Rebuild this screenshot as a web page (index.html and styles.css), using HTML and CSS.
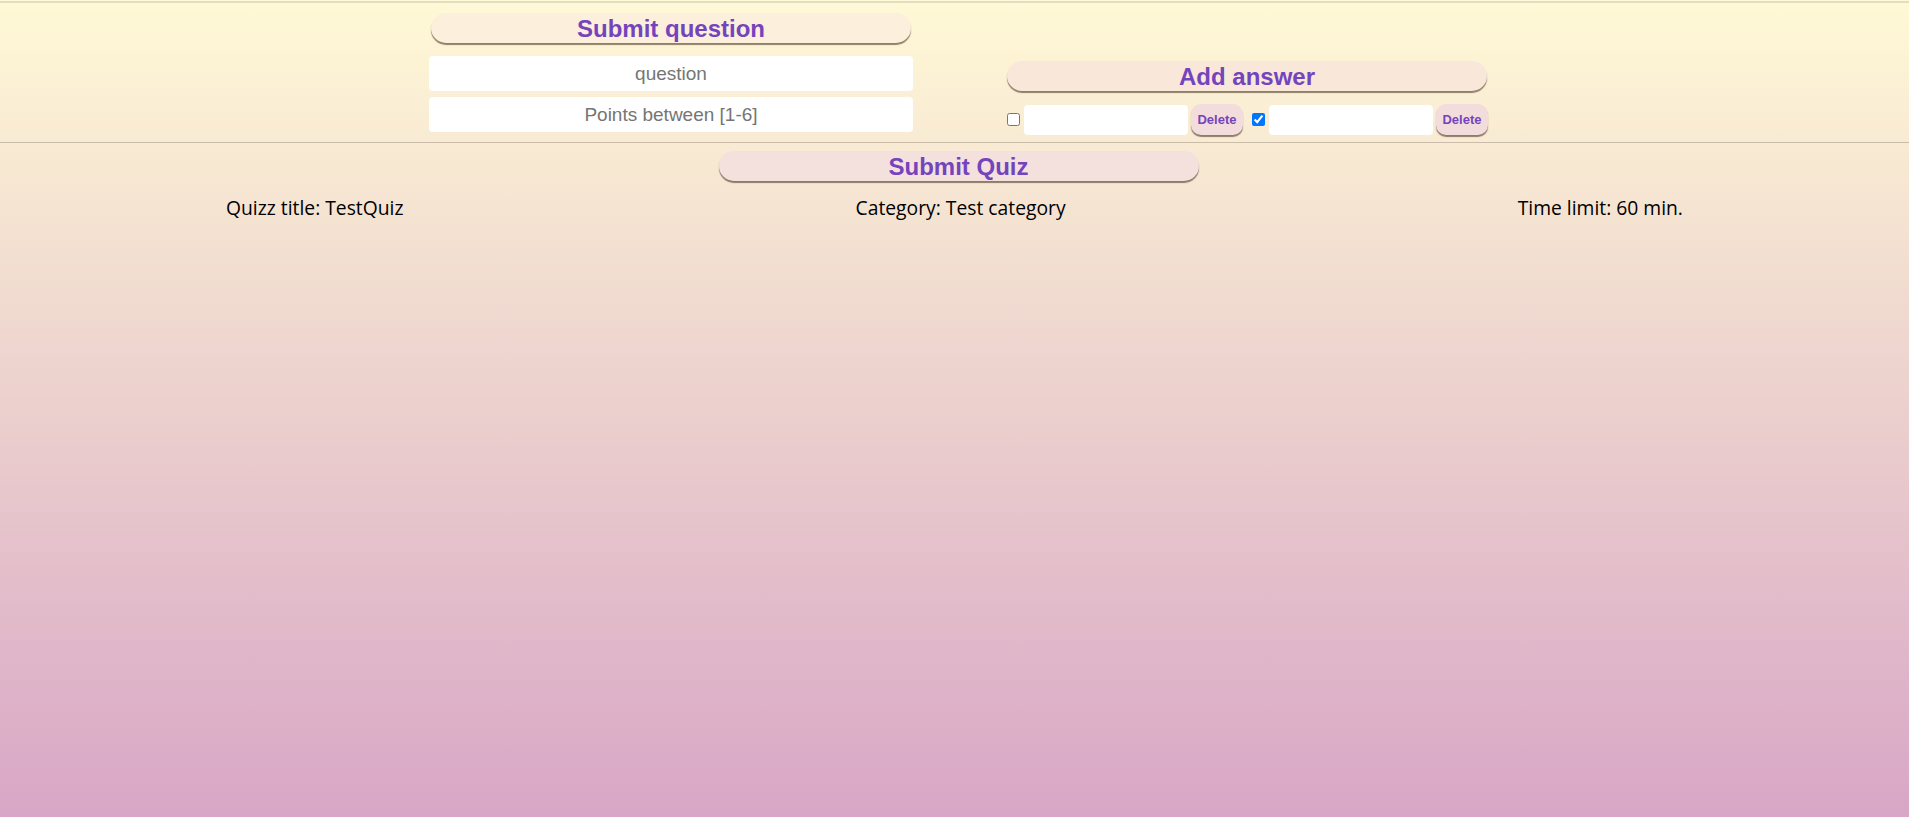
FILE: index.html
```html
<!DOCTYPE html>
<html lang="en">
<head>
<meta charset="utf-8">
<title>Quiz editor</title>
<link rel="stylesheet" href="styles.css">
</head>
<body>
<div class="page">
  <header class="editor">
    <form class="question-form">
      <button type="button" class="pill-btn pill-btn--question">Submit question</button>
      <input class="field" type="text" placeholder="question">
      <input class="field field--last" type="text" placeholder="Points between [1-6]">
    </form>
    <div class="answers">
      <button type="button" class="pill-btn pill-btn--answer">Add answer</button>
      <div class="answer-list">
        <div class="answer">
          <input class="answer-check" type="checkbox">
          <input class="answer-field" type="text">
          <button type="button" class="delete-btn">Delete</button>
        </div>
        <div class="answer">
          <input class="answer-check" type="checkbox" checked>
          <input class="answer-field" type="text">
          <button type="button" class="delete-btn">Delete</button>
        </div>
      </div>
    </div>
  </header>
  <div class="submit-row">
    <button type="button" class="pill-btn pill-btn--quiz">Submit Quiz</button>
  </div>
  <div class="info">
    <span class="info-item">Quizz title: TestQuiz</span>
    <span class="info-item">Category: Test category</span>
    <span class="info-item">Time limit: 60 min.</span>
  </div>
</div>
</body>
</html>
```
FILE: styles.css
```css
html, body {
  margin: 0;
  padding: 0;
}
body {
  min-height: 100vh;
  background: linear-gradient(to bottom, #fff9d6 0%, #d8a6c6 100%);
  font-family: "Liberation Sans", Arial, sans-serif;
}
.page {
  padding-top: 1px;
  padding-left: 8px;
}
.editor {
  display: flex;
  justify-content: center;
  align-items: flex-end;
  gap: 94px;
  border-top: 2px solid #e2dcc5;
  border-bottom: 1px solid #cbbba9;
  padding-bottom: 7px;
  margin-left: -8px;
  padding-left: 7px;
}
.question-form {
  display: flex;
  flex-direction: column;
  align-items: center;
  width: 484px;
  margin: 0;
}
.pill-btn {
  display: block;
  width: 480px;
  height: 30px;
  padding: 0;
  border: none;
  border-radius: 15px;
  font-family: "Liberation Sans", Arial, sans-serif;
  font-weight: bold;
  font-size: 24px;
  line-height: 31px;
  color: #7444bd;
  box-shadow: 0 2px 1px rgba(70, 50, 35, 0.6);
  cursor: pointer;
}
.pill-btn--question {
  margin-top: 10px;
  background: #fcefdb;
}
.pill-btn--answer {
  background: #f9e8da;
}
.pill-btn--quiz {
  background: #f4e0dc;
}
.field {
  display: block;
  box-sizing: border-box;
  width: 484px;
  height: 35px;
  margin-top: 13px;
  border: none;
  border-radius: 4px;
  background: #fff;
  font-family: "Liberation Sans", Arial, sans-serif;
  font-size: 19px;
  text-align: center;
  outline: none;
}
.field + .field {
  margin-top: 6px;
}
.field--last {
  margin-bottom: 3px;
}
.field::placeholder {
  color: #757575;
}
.answers {
  display: flex;
  flex-direction: column;
  width: 480px;
}
.answer-list {
  display: flex;
  gap: 9px;
  margin-top: 13px;
}
.answer {
  display: flex;
  align-items: center;
  gap: 3px;
}
.answer-check {
  width: 13px;
  height: 13px;
  margin: 0;
}
.answer-field {
  box-sizing: border-box;
  width: 164px;
  height: 30px;
  margin-left: 1px;
  border: none;
  border-radius: 4px;
  background: #fff;
  outline: none;
}
.delete-btn {
  box-sizing: border-box;
  width: 52px;
  height: 31px;
  padding: 0;
  border: none;
  border-radius: 10px;
  background: #f3dcdc;
  font-family: "Liberation Sans", Arial, sans-serif;
  font-weight: bold;
  font-size: 13px;
  color: #7444bd;
  box-shadow: 0 2px 1px rgba(70, 50, 35, 0.6);
  cursor: pointer;
}
.submit-row {
  display: flex;
  justify-content: center;
  margin-top: 8px;
}
.info {
  display: flex;
  justify-content: space-around;
  margin-top: 14px;
  margin-left: -8px;
  font-family: "Open Sans", "Noto Sans", sans-serif;
  font-size: 19.3px;
  line-height: 26px;
  color: #000;
}
```
